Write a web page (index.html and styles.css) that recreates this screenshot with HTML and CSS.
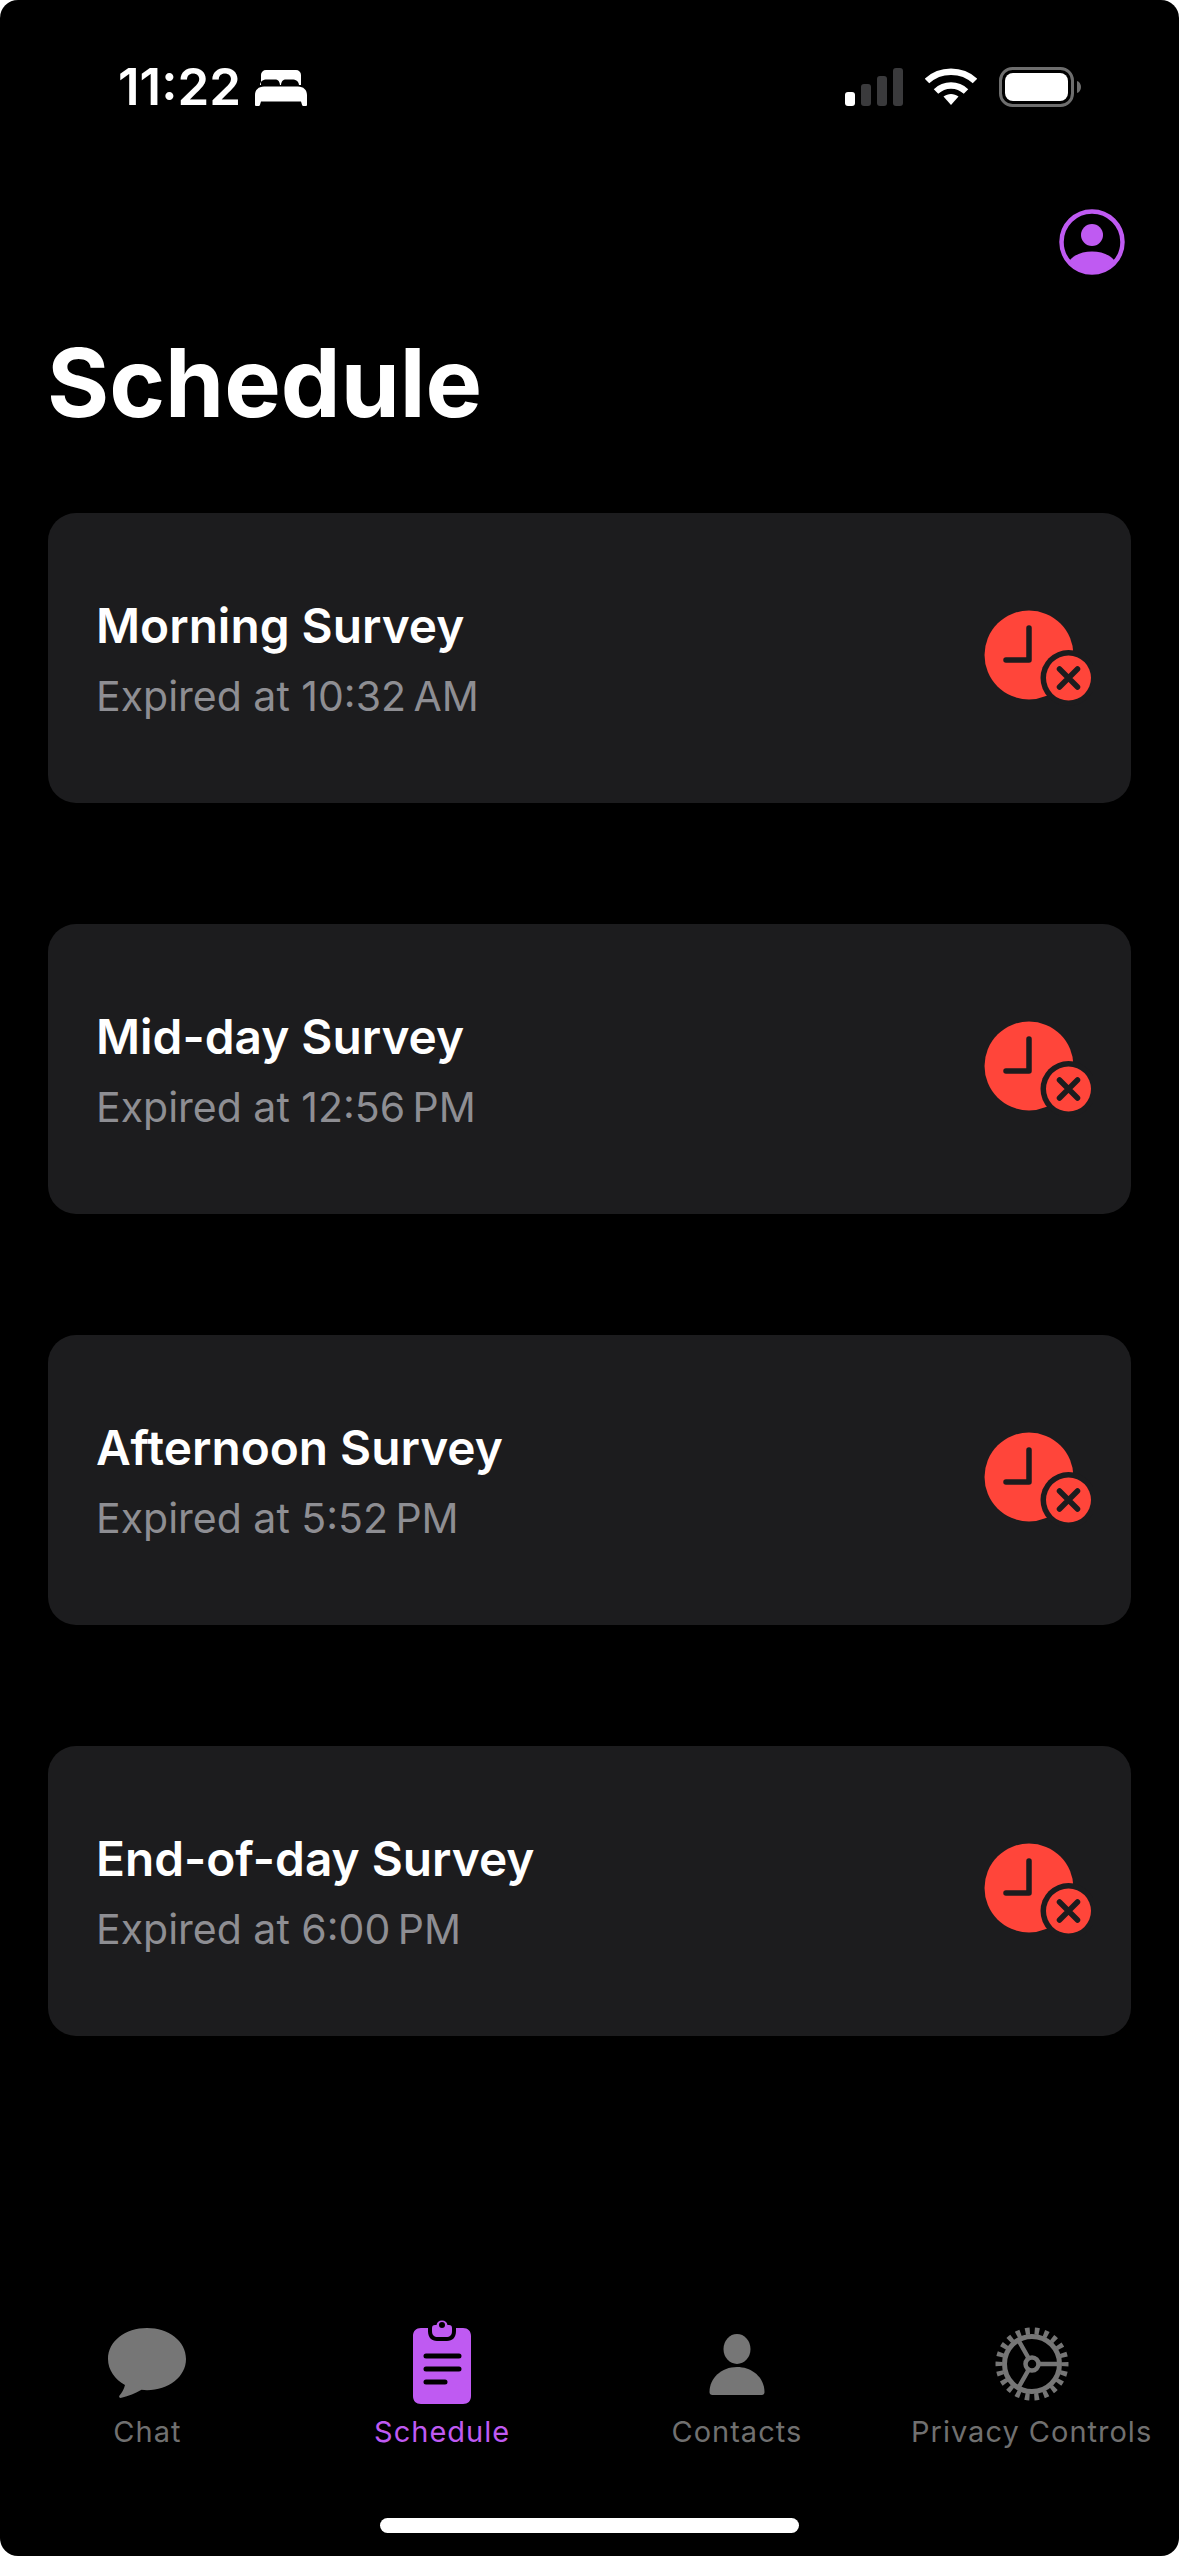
FILE: index.html
```html
<!DOCTYPE html>
<html lang="en">
<head>
    <meta charset="UTF-8">
    <meta name="viewport" content="width=device-width, initial-scale=1.0">
    <title>Schedule</title>
    <link rel="stylesheet" href="styles.css">
</head>
<body>
    <svg class="defs" width="0" height="0">
        <symbol id="expired" viewBox="0 0 110 110">
            <circle cx="46" cy="46" r="44.5" fill="#ff453a"/>
            <path d="M46 19V51H23" fill="none" stroke="#1c1c1e" stroke-width="5.500" stroke-linecap="round" stroke-linejoin="round"/>
            <circle cx="85.5" cy="69" r="28" fill="#1c1c1e"/>
            <circle cx="85.5" cy="69" r="22.5" fill="#ff453a"/>
            <path d="M76.5 60L94.5 78M94.5 60L76.5 78" fill="none" stroke="#1c1c1e" stroke-width="5.500" stroke-linecap="round"/>
        </symbol>
    </svg>

    <div class="phone">
        <div class="status-bar">
            <div class="status-left">
                <span class="clock">11:22</span>
                <svg class="bed" width="52" height="36" viewBox="0 0 52 36">
                    <path d="M6 15V5a5 5 0 0 1 5-5h30a5 5 0 0 1 5 5v10h-2c-.5-4-3-5.500-7-5.500h-6c-3 0-4.500 1.500-5 5.500h-1c-.5-4-2-5.500-5-5.500h-8c-4 0-6.500 1.500-7 5.500z" fill="#fff"/>
                    <path d="M9 16.500h34c5.500 0 9 3.500 9 8.500v10a1 1 0 0 1-1 1h-2.500c-.8 0-1.200-.4-1.500-1.200l-1-3.300H6l-1 3.300c-.3.8-.7 1.200-1.500 1.200H1a1 1 0 0 1-1-1V25c0-5 3.500-8.500 9-8.500z" fill="#fff"/>
                </svg>
            </div>
            <div class="status-right">
                <svg width="58" height="38" viewBox="0 0 58 38">
                    <rect x="0" y="24" width="10" height="14" rx="3" fill="#fff"/>
                    <rect x="16" y="16" width="10" height="22" rx="3" fill="#3a3a3c"/>
                    <rect x="32" y="8" width="10" height="30" rx="3" fill="#3a3a3c"/>
                    <rect x="48" y="0" width="10" height="38" rx="3" fill="#3a3a3c"/>
                </svg>
                <svg width="52" height="38" viewBox="0 0 52 38">
                    <path d="M2 13C15 .5 37 .5 50 13" fill="none" stroke="#fff" stroke-width="6.500"/>
                    <path d="M11 23.500C19.500 15.500 32.500 15.500 41 23.500" fill="none" stroke="#fff" stroke-width="6.500"/>
                    <path d="M18.500 28.500C23 25 29 25 33.500 28.500L26 37z" fill="#fff"/>
                </svg>
                <svg width="82" height="40" viewBox="0 0 82 40">
                    <rect x="1.500" y="1.500" width="72" height="37" rx="12" fill="none" stroke="#6e6e6e" stroke-width="3"/>
                    <rect x="6" y="6" width="63" height="28" rx="8" fill="#fff"/>
                    <path d="M78 14c2.500.8 4 3 4 6s-1.500 5.200-4 6z" fill="#6e6e6e"/>
                </svg>
            </div>
        </div>

        <div class="top-action">
            <svg width="66" height="66" viewBox="0 0 66 66">
                <circle cx="33" cy="33" r="30.500" fill="none" stroke="#bf5af2" stroke-width="4.500"/>
                <circle cx="33" cy="26" r="11" fill="#bf5af2"/>
                <path d="M10 52c6-7 14-9.500 23-9.500S50 45 56 52c-5.500 7-13.500 12-23 12S15.500 59 10 52z" fill="#bf5af2"/>
            </svg>
        </div>

        <h1 class="page-title">Schedule</h1>

        <div class="survey-list">
            <div class="survey-card">
                <div class="survey-text">
                    <div class="survey-name">Morning Survey</div>
                    <div class="survey-time">Expired at 10:32&#8201;AM</div>
                </div>
                <svg class="survey-icon"><use href="#expired"/></svg>
            </div>
            <div class="survey-card">
                <div class="survey-text">
                    <div class="survey-name">Mid-day Survey</div>
                    <div class="survey-time">Expired at 12:56&#8201;PM</div>
                </div>
                <svg class="survey-icon"><use href="#expired"/></svg>
            </div>
            <div class="survey-card">
                <div class="survey-text">
                    <div class="survey-name">Afternoon Survey</div>
                    <div class="survey-time">Expired at 5:52&#8201;PM</div>
                </div>
                <svg class="survey-icon"><use href="#expired"/></svg>
            </div>
            <div class="survey-card">
                <div class="survey-text">
                    <div class="survey-name">End-of-day Survey</div>
                    <div class="survey-time">Expired at 6:00&#8201;PM</div>
                </div>
                <svg class="survey-icon"><use href="#expired"/></svg>
            </div>
        </div>

        <div class="tab-bar">
            <div class="tab">
                <svg width="90" height="90" viewBox="0 0 90 90">
                    <path d="M45 9C23.500 9 6 22 6 40c0 11 7 20.500 17 26-1 4-3 7.500-5.500 10.500-1 1.300 0 2.800 2 2.300 7-1.500 14-4.500 20-8 2 .3 3.500.4 5.500.4 21.500 0 39-13.500 39-31.200C84 22 66.500 9 45 9z" fill="#767676"/>
                </svg>
                <span>Chat</span>
            </div>
            <div class="tab tab-active">
                <svg width="90" height="90" viewBox="0 0 90 90">
                    <path d="M24 9h7v3c0 6.500 3.500 10 9 10h10c5.500 0 9-3.500 9-10V9h7c5 0 8 3 8 8v60c0 5-3 8-8 8H24c-5 0-8-3-8-8V17c0-5 3-8 8-8z" fill="#bf5af2"/>
                    <path d="M38 6h1.500a5.600 5.600 0 0 1 11 0H52c2 0 3 1 3 3v3c0 4-2 6-6 6h-8c-4 0-6-2-6-6V9c0-2 1-3 3-3zM45 3a3 3 0 1 0 0 6a3 3 0 0 0 0-6z" fill="#bf5af2" fill-rule="evenodd"/>
                    <path d="M29 37H62M29 50H62M29 63H48" fill="none" stroke="#000" stroke-width="5" stroke-linecap="round"/>
                </svg>
                <span>Schedule</span>
            </div>
            <div class="tab">
                <svg width="90" height="90" viewBox="0 0 90 90">
                    <ellipse cx="45" cy="30" rx="13.500" ry="15" fill="#767676"/>
                    <path d="M17.500 73c0-14 12-25 27.500-25s27.500 11 27.500 25c0 2-1 3-3 3h-49c-2 0-3-1-3-3z" fill="#767676"/>
                </svg>
                <span>Contacts</span>
            </div>
            <div class="tab">
                <svg width="90" height="90" viewBox="0 0 90 90">
                    <circle cx="45" cy="45" r="33" fill="none" stroke="#767676" stroke-width="7" stroke-dasharray="4.500 4.925" stroke-dashoffset="2.250"/>
                    <circle cx="45" cy="45" r="27.500" fill="none" stroke="#767676" stroke-width="5"/>
                    <circle cx="45" cy="45" r="6.500" fill="none" stroke="#767676" stroke-width="4.500"/>
                    <path d="M52 45H73M41.500 39L31 20.500M41.500 51L31 69.500" fill="none" stroke="#767676" stroke-width="4.500"/>
                </svg>
                <span>Privacy Controls</span>
            </div>
        </div>

        <div class="home-row">
            <div class="home-indicator"></div>
        </div>
    </div>
</body>
</html>
```

FILE: styles.css
```css
* {
    box-sizing: border-box;
}

body {
    margin: 0;
    padding: 0;
    background: #fff;
    color: #fff;
    font-family: Inter, "Noto Sans", sans-serif;
}

.defs {
    display: block;
    height: 0;
}

.phone {
    display: flex;
    flex-direction: column;
    width: 1179px;
    height: 2556px;
    overflow: hidden;
    background: #000;
    border-radius: 18px;
}

.status-bar {
    display: flex;
    justify-content: space-between;
    align-items: center;
    height: 38px;
    margin-top: 68px;
    padding: 0 98px 0 118px;
}

.status-left {
    display: flex;
    align-items: center;
    gap: 14px;
}

.clock {
    font-size: 51px;
    font-weight: 600;
    line-height: 38px;
}

.bed {
    display: block;
    margin-top: 2px;
}

.status-right {
    display: flex;
    align-items: center;
    gap: 22px;
}

.status-right svg {
    display: block;
}

.top-action {
    display: flex;
    justify-content: flex-end;
    margin-top: 103px;
    padding-right: 54px;
}

.page-title {
    margin: 63px 0 0 47px;
    font-size: 95px;
    font-weight: 700;
    line-height: 90px;
}

.survey-list {
    display: flex;
    flex-direction: column;
    gap: 121px;
    margin: 85px 48px 0;
}

.survey-card {
    display: flex;
    justify-content: space-between;
    align-items: center;
    height: 290px;
    padding: 0 38px 0 48px;
    background: #1c1c1e;
    border-radius: 28px;
}

.survey-text {
    display: flex;
    flex-direction: column;
    gap: 18px;
    margin-top: 2px;
}

.survey-name {
    font-size: 47.8px;
    font-weight: 600;
    line-height: 56px;
}

.survey-time {
    font-size: 41px;
    line-height: 48px;
    color: #8e8e93;
}

.survey-icon {
    display: block;
    width: 110px;
    height: 110px;
    margin-top: 12px;
}

.tab-bar {
    display: grid;
    grid-template-columns: repeat(4, 1fr);
    margin-top: auto;
}

.tab {
    display: flex;
    flex-direction: column;
    align-items: center;
    color: #707070;
    font-size: 29px;
    letter-spacing: 1px;
    line-height: 36px;
    white-space: nowrap;
}

.tab svg {
    display: block;
}

.tab span {
    margin-top: 5px;
}

.tab-active {
    color: #bf5af2;
}

.home-row {
    display: flex;
    justify-content: center;
    height: 38px;
    margin-top: 68px;
}

.home-indicator {
    width: 419px;
    height: 15px;
    background: #fff;
    border-radius: 8px;
}
```
